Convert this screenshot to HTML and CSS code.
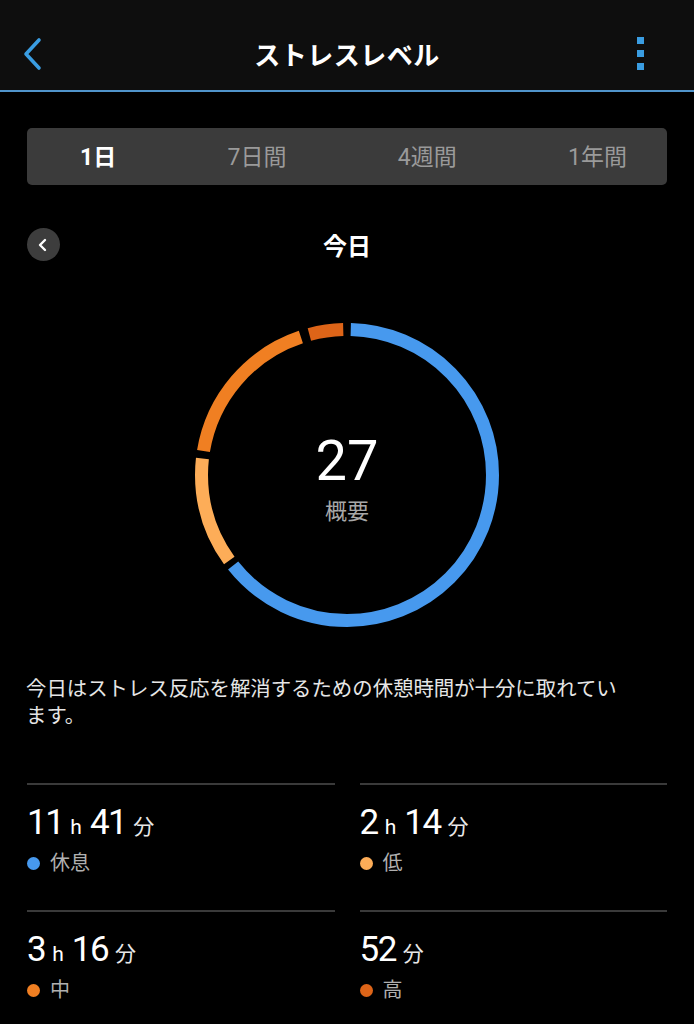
FILE: index.html
```html
<!DOCTYPE html>
<html lang="ja">
<head>
<meta charset="utf-8">
<title>ストレスレベル</title>
<link rel="stylesheet" href="styles.css">
</head>
<body>
<header class="topbar">
  <div class="topbar-left">
    <svg class="back-icon" width="24" height="34" viewBox="0 0 24 34"><polyline points="18,3 5,17 18,31" fill="none" stroke="#3a9de2" stroke-width="3.6" stroke-linecap="round" stroke-linejoin="round"/></svg>
  </div>
  <h1 class="title">ストレスレベル</h1>
  <div class="topbar-right">
    <div class="kebab"><span></span><span></span><span></span></div>
  </div>
</header>

<main class="content">
  <nav class="tabs">
    <span class="tab active">1日</span>
    <span class="tab">7日間</span>
    <span class="tab">4週間</span>
    <span class="tab">1年間</span>
  </nav>

  <div class="day-row">
    <div class="day-back">
      <svg width="12" height="14" viewBox="0 0 12 14"><polyline points="8,2 3,7 8,12" fill="none" stroke="#ffffff" stroke-width="2.4" stroke-linecap="round" stroke-linejoin="round"/></svg>
    </div>
    <div class="day-title">今日</div>
    <div class="day-spacer"></div>
  </div>

  <div class="ring-wrap">
    <svg class="ring" width="310" height="310" viewBox="0 0 310 310">
      <g transform="rotate(-90 155 155)" fill="none" stroke-width="13">
        <circle cx="155" cy="155" r="145.5" pathLength="360" stroke="#4799ee" stroke-dasharray="230 360" stroke-dashoffset="-1.5"/>
        <circle cx="155" cy="155" r="145.5" pathLength="360" stroke="#fdad58" stroke-dasharray="42.5 360" stroke-dashoffset="-234"/>
        <circle cx="155" cy="155" r="145.5" pathLength="360" stroke="#f07f22" stroke-dasharray="62 360" stroke-dashoffset="-279.5"/>
        <circle cx="155" cy="155" r="145.5" pathLength="360" stroke="#dd6418" stroke-dasharray="13.5 360" stroke-dashoffset="-345"/>
      </g>
    </svg>
    <div class="ring-center">
      <div class="score">27</div>
      <div class="score-label">概要</div>
    </div>
  </div>

  <p class="summary">今日はストレス反応を解消するための休憩時間が十分に取れています。</p>

  <section class="stats">
    <div class="stat">
      <div class="stat-value"><span class="num">11</span><span class="unit-h">h</span><span class="num">41</span><span class="unit-m">分</span></div>
      <div class="stat-label"><span class="dot dot-rest"></span>休息</div>
    </div>
    <div class="stat">
      <div class="stat-value"><span class="num">2</span><span class="unit-h">h</span><span class="num">14</span><span class="unit-m">分</span></div>
      <div class="stat-label"><span class="dot dot-low"></span>低</div>
    </div>
    <div class="stat">
      <div class="stat-value"><span class="num">3</span><span class="unit-h">h</span><span class="num">16</span><span class="unit-m">分</span></div>
      <div class="stat-label"><span class="dot dot-mid"></span>中</div>
    </div>
    <div class="stat">
      <div class="stat-value"><span class="num">52</span><span class="unit-m">分</span></div>
      <div class="stat-label"><span class="dot dot-high"></span>高</div>
    </div>
  </section>
</main>
</body>
</html>
```

FILE: styles.css
```css
* { box-sizing: border-box; }
html, body {
  margin: 0;
  padding: 0;
  background: #000;
  color: #fff;
  font-family: Roboto, "Noto Sans CJK JP", sans-serif;
}
body { width: 694px; min-height: 1024px; overflow: hidden; }

.topbar {
  height: 92px;
  background: #0e0e0e;
  border-bottom: 2px solid #5094cb;
  display: grid;
  grid-template-columns: 1fr auto 1fr;
  align-items: center;
  padding: 16px 0 0 0;
}
.topbar-left { padding-left: 21px; display: flex; align-items: center; }
.back-icon { display: block; margin-top: 2px; }
.title {
  margin: 0;
  font-size: 26px;
  font-weight: 700;
  letter-spacing: 0.5px;
  color: #fff;
}
.topbar-right { display: flex; justify-content: flex-end; padding-right: 50px; }
.kebab { display: flex; flex-direction: column; gap: 6px; }
.kebab span { width: 7px; height: 7px; background: #3a9de2; display: block; }

.content { padding: 0 27px; }

.tabs {
  margin-top: 36px;
  height: 57px;
  background: #3b3b3b;
  border-radius: 5px;
  display: flex;
  align-items: center;
  justify-content: space-between;
  padding: 0 40px 0 53px;
}
.tab { font-size: 23px; color: #9a9a9a; margin-top: -3px; }
.tab.active { color: #fff; font-weight: 700; }

.day-row {
  margin-top: 42px;
  height: 34px;
  display: grid;
  grid-template-columns: 34px 1fr 34px;
  align-items: center;
}
.day-back {
  width: 33px;
  height: 33px;
  border-radius: 50%;
  background: #3d3d3d;
  display: flex;
  align-items: center;
  justify-content: center;
}
.day-back svg { display: block; margin-left: -2px; }
.day-title {
  text-align: center;
  font-size: 24px;
  font-weight: 700;
}

.ring-wrap {
  position: relative;
  width: 310px;
  height: 310px;
  margin: 59px auto 0;
}
.ring { display: block; }
.ring-center {
  position: absolute;
  inset: 0;
  display: flex;
  flex-direction: column;
  align-items: center;
  justify-content: center;
  padding-top: 8px;
}
.score { font-size: 56px; line-height: 60px; font-weight: 400; color: #fff; }
.score-label { font-size: 22px; line-height: 30px; color: #a8a8a8; margin-top: 6px; }

.summary {
  margin: 46px 0 0 -1px;
  width: 605px;
  font-size: 20.4px;
  line-height: 27px;
  color: #e6e6e6;
}

.stats {
  margin-top: 53px;
  display: grid;
  grid-template-columns: 1fr 1fr;
  column-gap: 25px;
}
.stat {
  border-top: 2px solid #3a3a3a;
  padding: 18px 0 0;
  height: 127px;
}
.stat-value {
  display: flex;
  align-items: baseline;
  height: 40px;
  line-height: 40px;
}
.num { font-size: 35px; color: #fff; letter-spacing: -1.5px; }
.unit-h { font-size: 21px; color: #fff; margin: 0 8px 0 7px; }
.unit-m { font-size: 21px; color: #e8e8e8; margin-left: 7px; }
.stat-label {
  margin-top: 8px;
  display: flex;
  align-items: center;
  font-size: 20px;
  line-height: 24px;
  color: #b0b0b0;
}
.dot { width: 13px; height: 13px; border-radius: 50%; margin-right: 10px; margin-left: 0; }
.dot-rest { background: #4799ee; }
.dot-low { background: #fdad58; }
.dot-mid { background: #f07f22; }
.dot-high { background: #dd6418; }
```
